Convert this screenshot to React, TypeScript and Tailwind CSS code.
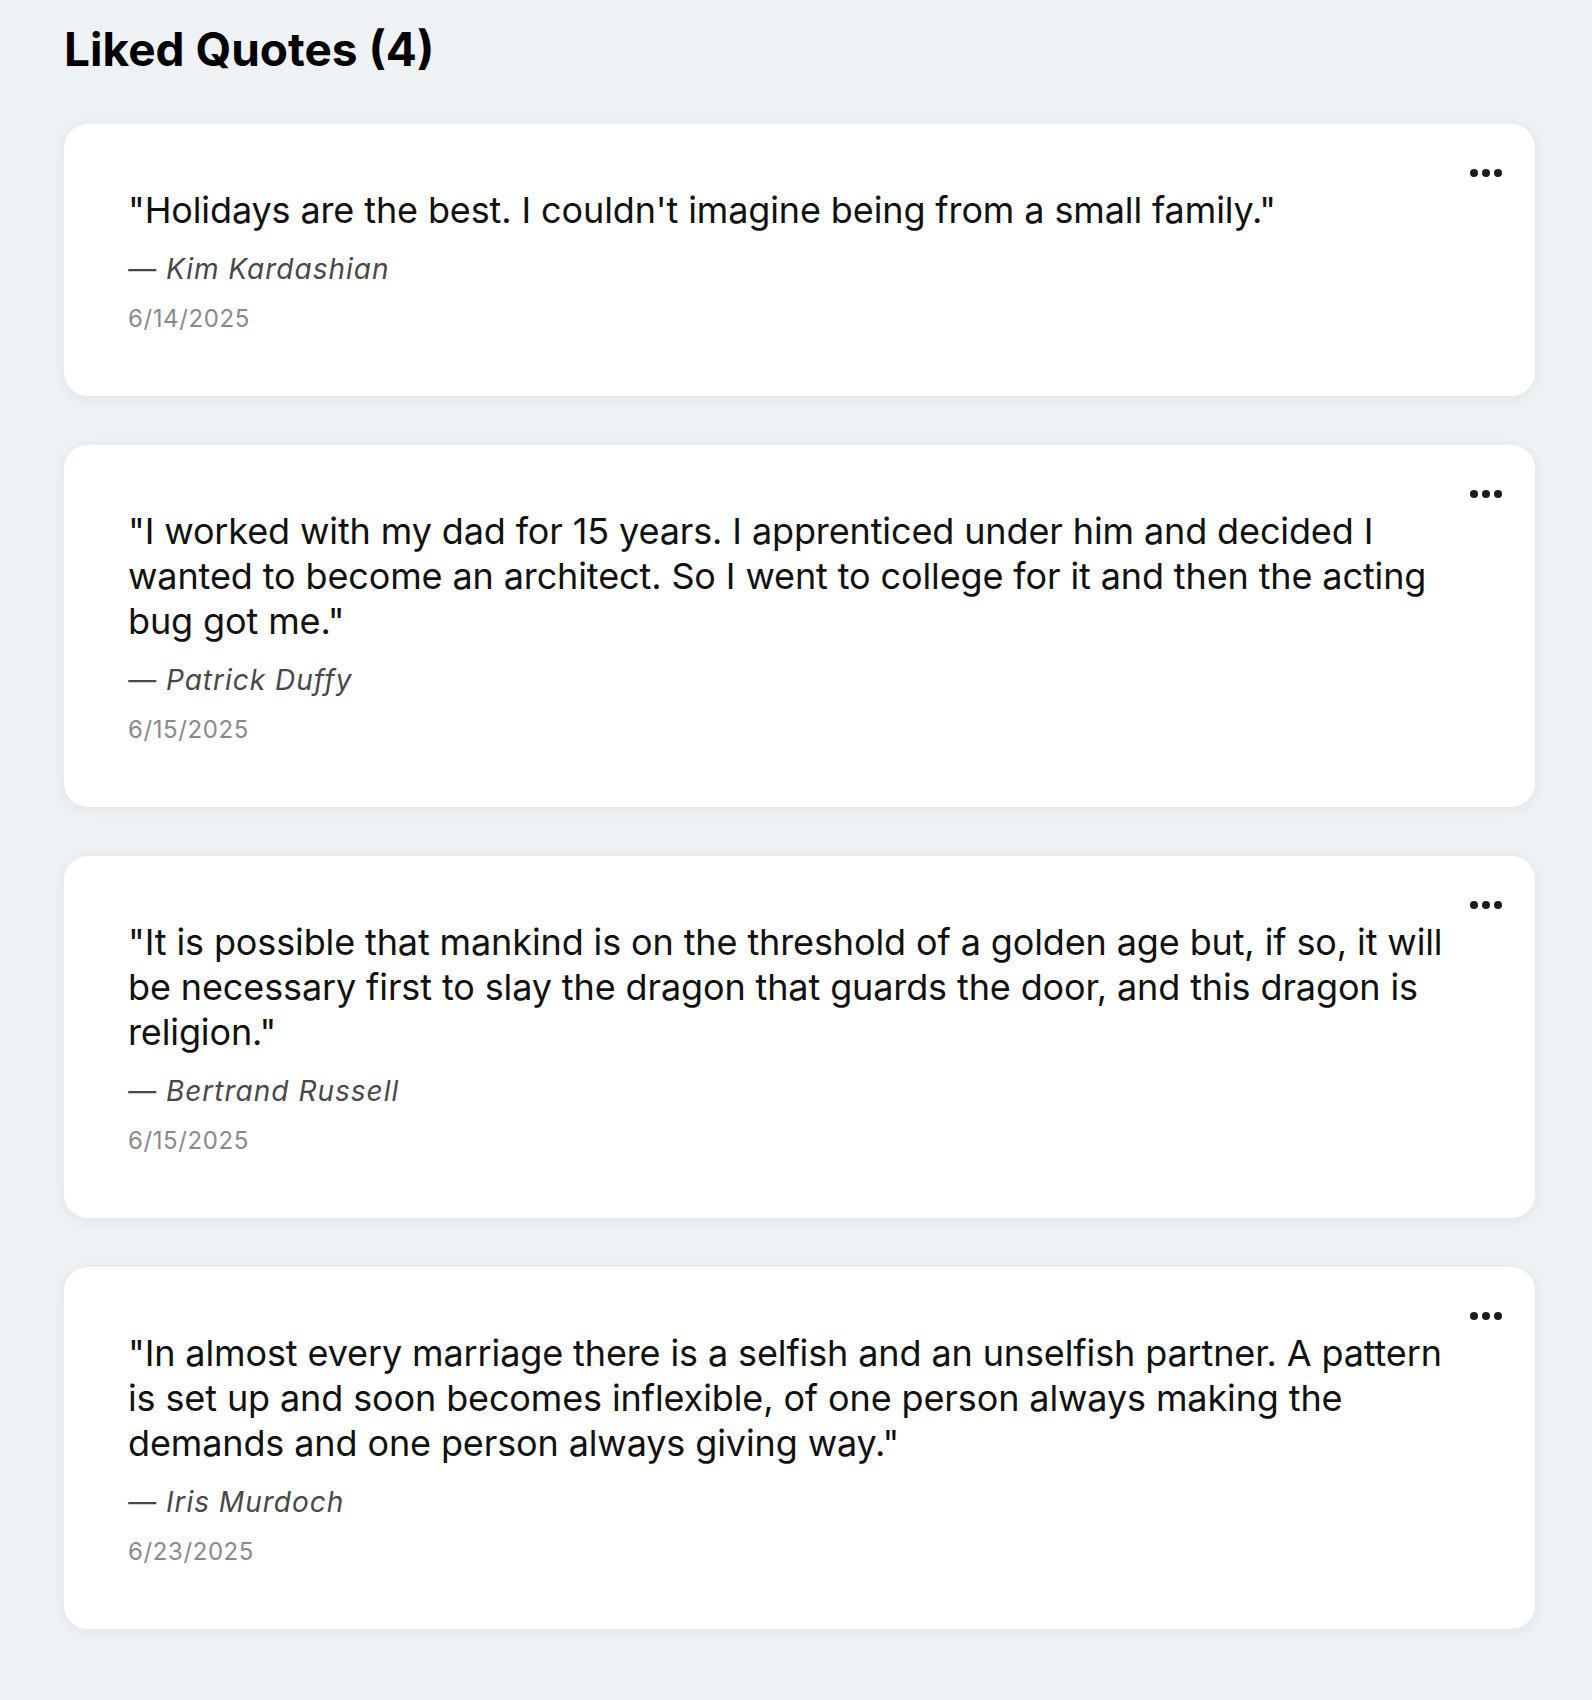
import { useState } from 'react';

interface Quote {
  id: number;
  text: string;
  author: string;
  likedAt: string;
}

const QUOTES: Quote[] = [
  {
    id: 1,
    text: "Holidays are the best. I couldn't imagine being from a small family.",
    author: 'Kim Kardashian',
    likedAt: '6/14/2025',
  },
  {
    id: 2,
    text: 'I worked with my dad for 15 years. I apprenticed under him and decided I wanted to become an architect. So I went to college for it and then the acting bug got me.',
    author: 'Patrick Duffy',
    likedAt: '6/15/2025',
  },
  {
    id: 3,
    text: 'It is possible that mankind is on the threshold of a golden age but, if so, it will be necessary first to slay the dragon that guards the door, and this dragon is religion.',
    author: 'Bertrand Russell',
    likedAt: '6/15/2025',
  },
  {
    id: 4,
    text: 'In almost every marriage there is a selfish and an unselfish partner. A pattern is set up and soon becomes inflexible, of one person always making the demands and one person always giving way.',
    author: 'Iris Murdoch',
    likedAt: '6/23/2025',
  },
];

const QuoteCard = ({ quote }: { quote: Quote }) => {
  const [menuOpen, setMenuOpen] = useState(false);

  return (
    <div className="relative rounded-[24px] bg-white px-16 pt-16 pb-[61px] shadow-[0_2px_14px_rgba(15,23,42,0.07)]">
      <button
        type="button"
        onClick={() => setMenuOpen(!menuOpen)}
        className="absolute top-[45px] right-[33px] flex items-center text-[#1c1c1e]"
        aria-label="More options"
      >
        <svg width="32" height="8" viewBox="0 0 32 8" fill="currentColor">
          <circle cx="4" cy="4" r="4" />
          <circle cx="16" cy="4" r="4" />
          <circle cx="28" cy="4" r="4" />
        </svg>
      </button>

      <p className="text-[36px] leading-[45px] tracking-[-0.12px] text-[#111111]">"{quote.text}"</p>
      <p className="mt-4 text-[28px] leading-[40px] tracking-[1px] italic text-[#48484a]">— {quote.author}</p>
      <p className="mt-[14px] text-[24px] leading-[32px] tracking-[0.6px] text-[#8a8a8e]">{quote.likedAt}</p>
    </div>
  );
};

export default function App() {
  return (
    <div className="min-h-screen bg-[#eff2f5] pl-16 pr-[57px] pt-[17px] pb-[70px] font-['Inter','Noto_Sans',sans-serif]">
      <h1 className="mb-[43px] text-[46px] leading-[64px] font-bold text-black">
        Liked Quotes ({QUOTES.length})
      </h1>

      <div className="flex flex-col gap-[49px]">
        {QUOTES.map((quote) => (
          <QuoteCard key={quote.id} quote={quote} />
        ))}
      </div>
    </div>
  );
}
